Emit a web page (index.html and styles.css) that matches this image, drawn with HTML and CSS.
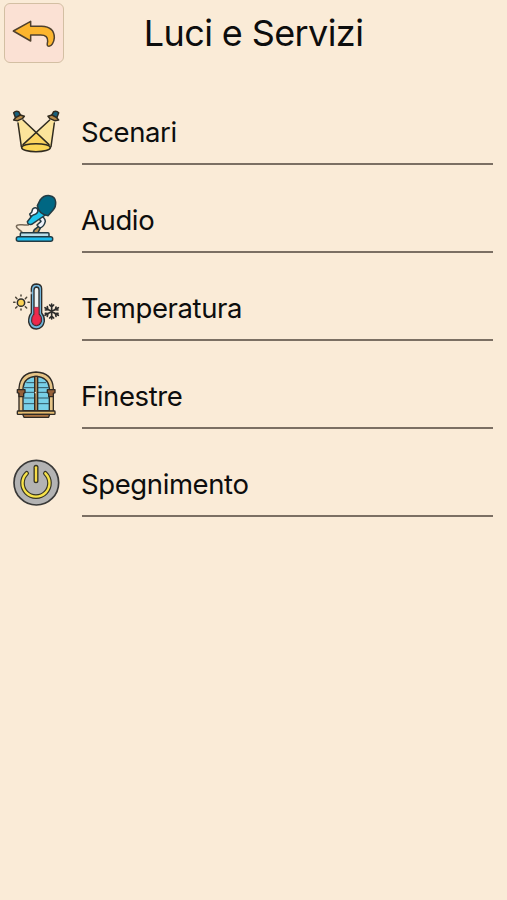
FILE: index.html
```html
<!DOCTYPE html>
<html lang="it">

<head>
    <meta charset="utf-8">
    <title>Luci e Servizi</title>
    <link rel="stylesheet" href="styles.css">
</head>

<body>
    <div class="header">
        <button class="back" aria-label="Indietro">
            <svg class="arrow" viewBox="12 9 180 180">
                <path d="M40 90 L92 61 L92 76 L125 76 C150 77 163 90 163 110 C162 125 154 136 147 136 C139 136 142 128 143 121 C144 109 137 102 122 102 L92 102 L92 120 Z" fill="#fcb52e" stroke="#50412e" stroke-width="4.5" stroke-linejoin="round" />
            </svg>
        </button>
        <h1>Luci e Servizi</h1>
    </div>
    <div class="menu">
        <div class="item">
            <!-- faretti -->
            <svg class="icon" viewBox="0 0 180 180">
                <g stroke="#302b20" stroke-width="4.5" stroke-linejoin="round" stroke-linecap="round">
                    <path d="M54 54 L132 128 Q129 146 95 147 Q56 147 49 132 L38 57Z" fill="#fce49b" stroke="none" />
                    <path d="M134 54 L54 128 Q58 146 93 147 Q133 146 138 132 L149 57Z" fill="#fce49b" stroke="none" />
                    <path d="M93 92 L134 130 H52Z" fill="#fcd45f" stroke="none" />
                    <ellipse cx="93" cy="137" rx="43" ry="12" fill="#fcd657" />
                    <path d="M39 63 L49 134 M54 54 L132 128 M148 63 L138 134 M134 54 L54 128" fill="none" />
                    <path d="M26 32 Q32 26 41 29 L47 40 L32 49Z" fill="#17617d" />
                    <path d="M161 32 Q155 26 146 29 L140 40 L155 49Z" fill="#17617d" />
                    <path d="M26 54 L32 47 L46 39 L58 43 L52 50 L38 56Z" fill="#b88b48" />
                    <path d="M161 54 L155 47 L141 39 L129 43 L135 50 L149 56Z" fill="#b88b48" />
                </g>
            </svg>
            <div class="label">Scenari</div>
        </div>
        <div class="item">
            <!-- microfono -->
            <svg class="icon" viewBox="0 0 180 180">
                <g stroke="#243b43" stroke-width="4.5" stroke-linejoin="round" stroke-linecap="round">
                    <path d="M52 128 C46 117 34 119 34 109 C36 99 53 107 70 105" fill="none" stroke="#776958" />
                    <path d="M102 107 L95 114 Q86 118 85 128 L99 128 L107 112Z" fill="#bc9658" />
                    <path d="M99 83 L105 76 Q120 82 121 94 Q117 111 104 114 L96 105 L108 94Z" fill="#edf1fa" />
                    <path d="M99 54 L121 75 L80 103 Q68 106 67 95Z" fill="#1fc4ec" />
                    <path d="M97 47 L106 29 Q117 15 134 17 Q151 20 152 36 Q153 50 145 59 L129 77 Q101 73 97 47Z" fill="#006783" />
                    <path d="M83 57 Q91 50 97 56 L99 64 Q95 74 87 74 L77 79 L74 72 L80 67Z" fill="#f7f8ff" />
                    <rect x="46" y="128" width="86" height="14" rx="3" fill="#b9deea" />
                    <rect x="34" y="140" width="109" height="14" rx="6" fill="#1dbdee" />
                </g>
            </svg>
            <div class="label">Audio</div>
        </div>
        <div class="item">
            <!-- termometro -->
            <svg class="icon" viewBox="0 0 180 180">
                <g stroke="#2d2d2c" stroke-width="4" stroke-linecap="round" stroke-linejoin="round">
                    <path d="M48 51V54 M48 93V96 M26 73H30 M69 73H73 M32 58L36 62 M61 86L65 90 M65 58L61 62 M32 90L36 86" stroke="#4c4538" stroke-width="4.5" />
                    <circle cx="48" cy="74" r="11" fill="#fbd255" stroke-width="4.5" />
                    <path d="M79 105 L79 32 Q80 18 95 18 Q110 19 110 32 L110 105 Q119 116 118 130 Q114 152 94 153 Q75 152 71 132 Q70 116 79 105Z" fill="#72b6dc" />
                    <path d="M87 108 L87 36 Q88 27 95 27 Q102 28 102 36 L102 108 Q111 117 109 130 Q105 142 94 143 Q82 142 80 129 Q80 116 87 108Z" fill="#edf2f1" />
                    <path d="M88 88H101V109 Q110 117 108 129 Q104 141 94 142 Q83 140 81 129 Q80 116 88 109Z" fill="#ee294c" stroke="#8b263b" stroke-width="2" />
                    <path d="M140 78V123 M120 89L160 112 M120 112L160 89 M134 81L140 87L146 81 M134 120L140 114L146 120 M121 96L129 95L127 86 M121 106L129 107L127 115 M159 96L151 95L153 87 M159 106L151 107L153 115" fill="none" stroke-width="5" />
                    <path d="M75 45H81 M78 42V48" stroke="#fff" stroke-width="2" />
                </g>
            </svg>
            <div class="label">Temperatura</div>
        </div>
        <div class="item">
            <!-- finestra -->
            <svg class="icon" viewBox="0 0 180 180">
                <g stroke="#302b25" stroke-width="4" stroke-linejoin="round">
                    <path d="M42 136 V67 Q45 20 93 18 Q142 20 145 67 V136Z" fill="#e5c487" />
                    <path d="M54 134 V66 Q57 33 93 31 Q130 33 133 66 V134Z" fill="#78d0e8" />
                    <path d="M64 50H88 M99 50H123 M55 65H88 M99 65H132 M55 79H88 M99 79H132 M55 96H88 M99 96H132 M55 113H88 M99 113H132" stroke="#315664" stroke-width="3" />
                    <rect x="89" y="31" width="9" height="104" fill="#b18a58" />
                    <path d="M37 71H60V80L56 82V92H42V82L37 80Z" fill="#956038" />
                    <path d="M127 71H150V80L145 82V92H131V82L127 80Z" fill="#956038" />
                    <rect x="37" y="135" width="113" height="10" rx="2" fill="#e5bc70" />
                    <path d="M53 145H134L131 154H57Z" fill="#ad7643" />
                    <circle cx="91" cy="80" r="2" fill="#fff" stroke="none" />
                </g>
            </svg>
            <div class="label">Finestre</div>
        </div>
        <div class="item">
            <!-- accensione -->
            <svg class="icon" viewBox="0 0 180 180">
                <circle cx="94" cy="86" r="67" fill="#b3b3b3" stroke="#393938" stroke-width="5" />
                <g fill="none" stroke-linecap="round">
                    <path d="M65 58 A40.5 40.5 0 1 0 121 58" stroke="#373522" stroke-width="14" />
                    <path d="M65 58 A40.5 40.5 0 1 0 121 58" stroke="#f7e34a" stroke-width="7" />
                    <path d="M93 40V80" stroke="#373522" stroke-width="15" />
                    <path d="M93 40V80" stroke="#f7dc48" stroke-width="7" />
                </g>
            </svg>
            <div class="label">Spegnimento</div>
        </div>
    </div>
</body>

</html>
```
FILE: styles.css
```css
* {
    box-sizing: border-box;
}

body {
    margin: 0px;
    background-color: antiquewhite;
    color: #0d0d0d;
    font-family: Inter, "Liberation Sans", sans-serif;
}

.header {
    display: grid;
    grid-template-columns: 60px 1fr 60px;
    height: 77px;
    padding: 3px 4px;
}

.back {
    width: 60px;
    height: 60px;
    padding: 0px;
    background-color: #fbe1d4;
    border: 1px solid #d3bfa3;
    border-radius: 6px;
}

.arrow {
    display: block;
    width: 60px;
    height: 60px;
    margin: 0px -1px;
}

h1 {
    margin: 0px;
    padding-top: 8px;
    text-align: center;
    font-size: 36px;
    line-height: 44px;
    font-weight: 400;
    letter-spacing: -0.6px;
}

.item {
    display: flex;
    height: 88px;
    padding-left: 5px;
    padding-right: 14px;
}

.icon {
    width: 60px;
    height: 60px;
    margin-top: 25px;
    margin-right: 17px;
}

.label {
    flex: 1;
    padding-top: 37px;
    border-bottom: 2px solid #7b6f63;
    font-size: 27.5px;
    line-height: 36px;
    letter-spacing: -0.4px;
    text-indent: -1px;
}
```
